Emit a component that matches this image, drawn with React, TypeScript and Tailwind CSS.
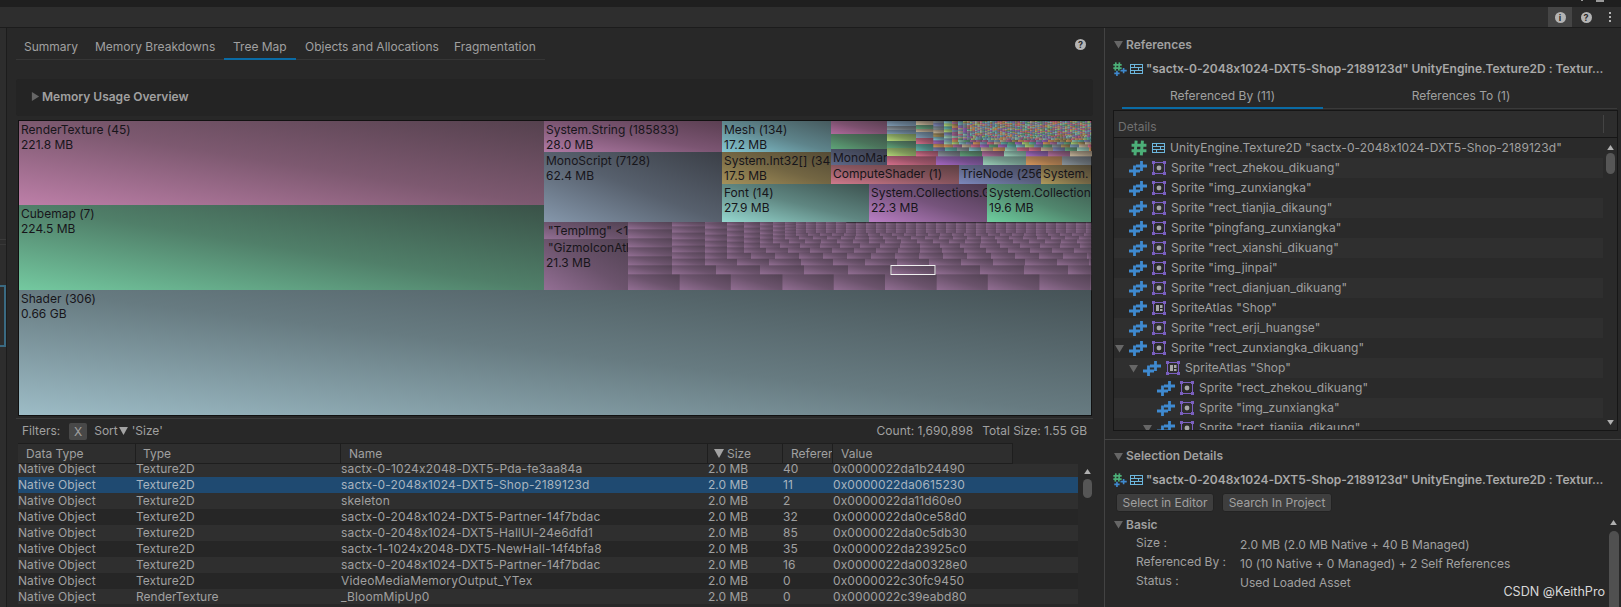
import React from "react";

type Box = { x: number; y: number; w: number; h: number; g: string; a?: string; b?: string; ax?: number };

const GRADS: Record<string, [string, string]> = {
  render: ["#bd7fa8", "#55414e"],
  cube: ["#74c9a0", "#3a5248"],
  shader: ["#9dbcc6", "#465357"],
  str: ["#b07aa5", "#5b3f52"],
  mono: ["#8597ab", "#3b3f47"],
  mesh: ["#85c8d4", "#465a5e"],
  int: ["#a5915a", "#544b35"],
  font: ["#96d8d0", "#3d5350"],
  coll1: ["#ba7fc5", "#4c3a50"],
  coll2: ["#6fd0a0", "#3f5a50"],
  comp: ["#d07a8c", "#5c3f42"],
  trie: ["#7c88bc", "#45485c"],
  sys: ["#b09a5c", "#4d4535"],
  mam: ["#5f6a8c", "#3a3d4a"],
  pink: ["#b06a9c", "#5a4052"],
  green: ["#5ea578", "#3f5549"],
  brick: ["#936f94", "#524253"],
  blue: ["#7f9cb4", "#4c5a68"],
  lime: ["#b4d878", "#5d7048"],
  tan: ["#c4b498", "#6a6055"],
  teal: ["#62b4ac", "#3a5f5c"],
  rose: ["#d8708c", "#70404f"],
  purple: ["#a868c4", "#54406a"],
  orange: ["#d8985c", "#7a5a3f"],
  grey: ["#8a949c", "#4a4e54"],
  mint: ["#9cd0b8", "#56706a"],
};

const NOISE = ["pink", "green", "blue", "lime", "tan", "teal", "rose", "purple", "orange", "grey", "mint", "mesh", "sys", "trie"];

// gradient reads darker through the middle, like the unity shader
function mix(from: string, to: string, t: number) {
  const ch = (s: string, i: number) => parseInt(s.slice(i, i + 2), 16);
  const part = (i: number) => Math.round(ch(from, i) + (ch(to, i) - ch(from, i)) * t);
  return `rgb(${part(1)},${part(3)},${part(5)})`;
}

const LABELLED: Box[] = [
  { x: 19, y: 121, w: 525, h: 84, g: "render", a: "RenderTexture (45)", b: "221.8 MB" },
  { x: 19, y: 205, w: 525, h: 85, g: "cube", a: "Cubemap (7)", b: "224.5 MB" },
  { x: 19, y: 290, w: 1072, h: 125, g: "shader", a: "Shader (306)", b: "0.66 GB" },
  { x: 544, y: 121, w: 178, h: 31, g: "str", a: "System.String (185833)", b: "28.0 MB" },
  { x: 544, y: 152, w: 178, h: 70, g: "mono", a: "MonoScript (7128)", b: "62.4 MB" },
  { x: 722, y: 121, w: 109, h: 31, g: "mesh", a: "Mesh (134)", b: "17.2 MB" },
  { x: 722, y: 152, w: 109, h: 32, g: "int", a: "System.Int32[] (34", b: "17.5 MB" },
  { x: 722, y: 184, w: 147, h: 38, g: "font", a: "Font (14)", b: "27.9 MB" },
  { x: 869, y: 184, w: 118, h: 38, g: "coll1", a: "System.Collections.Ge", b: "22.3 MB" },
  { x: 987, y: 184, w: 104, h: 38, g: "coll2", a: "System.Collections", b: "19.6 MB" },
  { x: 831, y: 121, w: 56, h: 13, g: "pink" },
  { x: 831, y: 134, w: 56, h: 15, g: "green" },
  { x: 831, y: 149, w: 56, h: 16, g: "mam", a: "MonoManager" },
  { x: 831, y: 165, w: 128, h: 19, g: "comp", a: "ComputeShader (1)" },
  { x: 959, y: 165, w: 82, h: 19, g: "trie", a: "TrieNode (2560" },
  { x: 1041, y: 165, w: 50, h: 19, g: "sys", a: "System." },
  { x: 544, y: 222, w: 84, h: 17, g: "brick", a: "\"TempImg\" <1024", ax: 4 },
  { x: 544, y: 239, w: 84, h: 51, g: "brick", a: "\"GizmoIconAtlas", b: "21.3 MB", ax: 4 },
];

const FIXED: Box[] = [
  { x: 887, y: 121, w: 29, h: 5, g: "blue" },
  { x: 887, y: 126, w: 29, h: 4, g: "grey" },
  { x: 887, y: 130, w: 29, h: 4, g: "blue" },
  { x: 887, y: 134, w: 29, h: 7, g: "lime" },
  { x: 887, y: 141, w: 29, h: 7, g: "green" },
  { x: 887, y: 148, w: 29, h: 8, g: "lime" },
  { x: 887, y: 156, w: 49, h: 9, g: "rose" },
  { x: 936, y: 156, w: 47, h: 9, g: "purple" },
  { x: 983, y: 156, w: 43, h: 9, g: "mint" },
  { x: 1026, y: 156, w: 36, h: 9, g: "orange" },
  { x: 1062, y: 156, w: 29, h: 9, g: "grey" },
  { x: 916, y: 121, w: 17, h: 4, g: "tan" },
  { x: 916, y: 125, w: 17, h: 4, g: "green" },
  { x: 916, y: 129, w: 17, h: 3, g: "tan" },
  { x: 916, y: 132, w: 17, h: 6, g: "blue" },
  { x: 916, y: 138, w: 17, h: 6, g: "rose" },
  { x: 916, y: 144, w: 17, h: 7, g: "teal" },
];
["rose", "grey", "green", "pink", "mint", "purple", "pink", "tan"].forEach((g, i) => {
  FIXED.push({ x: 916 + i * 22, y: 151, w: 22, h: 5, g });
});

// carve a region with a bottom row, then a left column, each a bit finer than the last
function carve(x0: number, y0: number, x1: number, y1: number, ws: number[], hs: number[], pick: (n: number) => string) {
  const out: Box[] = [];
  let n = 0;
  let i = 0;
  while (x1 - x0 > 0.5 && y1 - y0 > 0.5) {
    const w = ws[Math.min(i, ws.length - 1)];
    const h = hs[Math.min(i, hs.length - 1)];
    const rowH = Math.min(h, y1 - y0);
    for (let x = x0; x < x1; x += w) {
      out.push({ x, y: y1 - rowH, w: Math.min(w, x1 - x), h: rowH, g: pick(n++) });
    }
    y1 -= rowH;
    const cw = ws[Math.min(i + 1, ws.length - 1)];
    const ch = hs[Math.min(i + 1, hs.length - 1)];
    const colW = Math.min(cw, x1 - x0);
    for (let y = y1; y > y0; y -= ch) {
      out.push({ x: x0, y: Math.max(y - ch, y0), w: colW, h: Math.min(ch, y - y0), g: pick(n++) });
    }
    x0 += colW;
    i += 2;
  }
  return out;
}

const BRICKS = carve(
  628, 222, 1091, 290,
  [51.4, 44, 44, 33, 32, 22, 24, 17, 22, 16, 20, 13, 16, 12, 14, 11, 12, 10],
  [16, 9, 9, 6.5, 6.5, 6, 6, 5.5, 5, 5, 4.5, 4.5, 4, 4, 3.5, 3, 3, 2.5],
  () => "brick",
);

let seed = 17;
const noise = () => {
  seed = (seed * 1103515245 + 12345) & 0x7fffffff;
  return NOISE[(seed >> 8) % NOISE.length];
};
const MOSAIC = carve(
  933, 121, 1091, 151,
  [12, 11, 9, 8, 7, 6, 6, 5, 4, 4, 3, 3, 3, 2.5],
  [4, 3.5, 3, 3, 2.5, 2, 2, 1.5, 1.5, 1.5, 1.2, 1.2, 1, 1],
  noise,
);

function TreeMap() {
  return (
    <svg viewBox="18 120 1074 296" className="w-[1074px] h-[296px] block shrink-0 ml-[11px]">
      <defs>
        {Object.entries(GRADS).map(([k, [from, to]]) => (
          <linearGradient key={k} id={k} x1="0" y1="1" x2="1" y2="0">
            <stop offset="0" stopColor={from} />
            <stop offset="0.5" stopColor={mix(from, to, 0.62)} />
            <stop offset="1" stopColor={to} />
          </linearGradient>
        ))}
      </defs>
      <rect x="18" y="120" width="1074" height="296" fill="#111111" />
      {[...BRICKS, ...MOSAIC, ...FIXED].map((b, i) => (
        <rect key={i} x={b.x} y={b.y} width={b.w + 0.3} height={b.h + 0.3} fill={`url(#${b.g})`} />
      ))}
      {LABELLED.map((b) => (
        <svg key={`${b.x}-${b.y}`} x={b.x} y={b.y} width={b.w} height={b.h}>
          <rect width={b.w} height={b.h} fill={`url(#${b.g})`} />
          {b.a && (
            <text x={b.ax ?? 2} y="13" fontSize="12" fill="#17151a">
              {b.a}
            </text>
          )}
          {b.b && (
            <text x="2" y="28" fontSize="12" fill="#17151a">
              {b.b}
            </text>
          )}
        </svg>
      ))}
      <rect x="891" y="265.5" width="44" height="9" fill="none" stroke="#f0f0f0" strokeWidth="1" />
    </svg>
  );
}

function Tri({ open }: { open?: boolean }) {
  return (
    <svg viewBox="0 0 10 10" className="w-[9px] h-[9px] shrink-0">
      {open ? <polygon points="0,1 10,1 5,9.5" fill="#666666" /> : <polygon points="1,0 9,5 1,10" fill="#666666" />}
    </svg>
  );
}

function HashIcon({ big }: { big?: boolean }) {
  return (
    <svg viewBox="0 0 14 14" className={big ? "w-[16px] h-[16px] shrink-0" : "w-[9px] h-[9px] shrink-0"}>
      <path d="M4.5 0.5 L3.5 13.5 M10 0.5 L9 13.5 M0.5 4.5 H13.5 M0.5 9.5 H13.5" stroke="#4caf78" strokeWidth="2.6" fill="none" />
    </svg>
  );
}

function PlusPair() {
  return (
    <svg viewBox="0 0 18 15" className="w-[18px] h-[15px] shrink-0">
      <path d="M0 10 H11 M5.5 4.5 V15" stroke="#3f8ad0" strokeWidth="2.8" fill="none" />
      <path d="M7 5 H18 M12.5 0 V10" stroke="#3f8ad0" strokeWidth="2.8" fill="none" />
    </svg>
  );
}

function MiniRefIcon() {
  return (
    <span className="w-[14px] h-[14px] shrink-0 relative block">
      <span className="absolute left-0 top-0 block leading-none">
        <HashIcon />
      </span>
      <svg viewBox="0 0 14 9" className="absolute left-[1px] top-[6px] w-[13px] h-[8px]">
        <path d="M0 6 H6 M3 3 V9" stroke="#3f8ad0" strokeWidth="1.8" fill="none" />
        <path d="M7 3 H14 M10.5 0 V6" stroke="#3f8ad0" strokeWidth="1.8" fill="none" />
      </svg>
    </span>
  );
}

function BrickIcon() {
  return (
    <svg viewBox="0 0 13 10" className="w-[13px] h-[10px] shrink-0">
      <rect x="0.5" y="0.5" width="12" height="9" fill="none" stroke="#6cb6dc" />
      <path d="M0 3.5 H13 M0 6.5 H13 M4.5 0 V3.5 M8.5 3.5 V6.5 M4.5 6.5 V10" stroke="#6cb6dc" fill="none" />
    </svg>
  );
}

function SpriteIcon({ atlas }: { atlas?: boolean }) {
  return (
    <svg viewBox="0 0 14 14" className="w-[14px] h-[14px] shrink-0">
      <rect x="1.5" y="1.5" width="11" height="11" fill="none" stroke="#7a5fc0" />
      <path d="M0 0 h3 v3 h-3 z M11 0 h3 v3 h-3 z M0 11 h3 v3 h-3 z M11 11 h3 v3 h-3 z" fill="#7a5fc0" />
      {atlas ? (
        <path d="M4 4 h3 v6 h-3 z M8 4 h2.5 v3 h-2.5 z M8 8 h2.5 v2 h-2.5 z" fill="#a8a8a8" />
      ) : (
        <circle cx="7" cy="7" r="2.4" fill="#a8a8a8" />
      )}
    </svg>
  );
}

function RoundIcon({ glyph }: { glyph: string }) {
  return (
    <span className="w-[11px] h-[11px] rounded-full bg-[#b4b4b4] text-[#2b2b2b] text-[9px] font-bold leading-[11px] text-center block">
      {glyph}
    </span>
  );
}

const TABS = [
  { label: "Summary", cls: "w-[71px] pl-2 border-b border-[#363636]" },
  { label: "Memory Breakdowns", cls: "w-[137px] pl-2 border-b border-[#363636]" },
  { label: "Tree Map", cls: "w-[72px] pl-[9px] border-b-2 border-[#0a6ba5]" },
  { label: "Objects and Allocations", cls: "w-[150px] pl-[9px] border-b border-[#363636]" },
  { label: "Fragmentation", cls: "w-[99px] pl-2 border-b border-[#363636]" },
];

const OBJECTS = [
  ["Texture2D", "sactx-0-1024x2048-DXT5-Pda-fe3aa84a", "40", "0x0000022da1b24490"],
  ["Texture2D", "sactx-0-2048x1024-DXT5-Shop-2189123d", "11", "0x0000022da0615230"],
  ["Texture2D", "skeleton", "2", "0x0000022da11d60e0"],
  ["Texture2D", "sactx-0-2048x1024-DXT5-Partner-14f7bdac", "32", "0x0000022da0ce58d0"],
  ["Texture2D", "sactx-0-2048x1024-DXT5-HallUI-24e6dfd1", "85", "0x0000022da0c5db30"],
  ["Texture2D", "sactx-1-1024x2048-DXT5-NewHall-14f4bfa8", "35", "0x0000022da23925c0"],
  ["Texture2D", "sactx-0-2048x1024-DXT5-Partner-14f7bdac", "16", "0x0000022da00328e0"],
  ["Texture2D", "VideoMediaMemoryOutput_YTex", "0", "0x0000022c30fc9450"],
  ["RenderTexture", "_BloomMipUp0", "0", "0x0000022c39eabd80"],
];

const REFS = [
  { name: "Sprite \"rect_zhekou_dikuang\"", depth: 0 },
  { name: "Sprite \"img_zunxiangka\"", depth: 0 },
  { name: "Sprite \"rect_tianjia_dikaung\"", depth: 0 },
  { name: "Sprite \"pingfang_zunxiangka\"", depth: 0 },
  { name: "Sprite \"rect_xianshi_dikuang\"", depth: 0 },
  { name: "Sprite \"img_jinpai\"", depth: 0 },
  { name: "Sprite \"rect_dianjuan_dikuang\"", depth: 0 },
  { name: "SpriteAtlas \"Shop\"", depth: 0, atlas: true },
  { name: "Sprite \"rect_erji_huangse\"", depth: 0 },
  { name: "Sprite \"rect_zunxiangka_dikuang\"", depth: 0, open: true },
  { name: "SpriteAtlas \"Shop\"", depth: 1, atlas: true, open: true },
  { name: "Sprite \"rect_zhekou_dikuang\"", depth: 2 },
  { name: "Sprite \"img_zunxiangka\"", depth: 2 },
  { name: "Sprite \"rect_tianjia_dikaung\"", depth: 2, open: true },
];

const DEPTH_PAD = ["pl-[15px]", "pl-[29px]", "pl-[43px]"];

const TITLE = "\"sactx-0-2048x1024-DXT5-Shop-2189123d\" UnityEngine.Texture2D : Textur...";

function TitleLine() {
  return (
    <div className="flex items-center h-[16px] pl-[8px]">
      <MiniRefIcon />
      <span className="ml-[3px]">
        <BrickIcon />
      </span>
      <span className="ml-[3px] font-semibold text-[#a9a9a9] whitespace-nowrap">{TITLE}</span>
    </div>
  );
}

export default function App() {
  return (
    <div className="w-[1621px] h-[607px] overflow-hidden bg-[#282828] text-[#a0a0a0] text-[12px] leading-4 flex flex-col font-['Inter',sans-serif] [font-feature-settings:'calt'_0]">
      <div className="h-[7px] bg-[#1f1f1f] shrink-0 flex justify-end">
        <span className="w-[2px] h-px bg-[#9a9a9a] mr-[13px]" />
        <span className="w-[8px] h-[2px] bg-[#9a9a9a] mr-[17px]" />
      </div>
      <div className="h-[21px] shrink-0 bg-[#2e2e2e] border-b border-[#1c1c1c] flex justify-end">
        <div className="w-[24px] h-[20px] bg-[#454545] flex items-center justify-center mr-px">
          <RoundIcon glyph="i" />
        </div>
        <div className="w-[26px] h-[20px] flex items-center justify-center">
          <RoundIcon glyph="?" />
        </div>
        <div className="w-[22px] h-[20px] flex flex-col items-center justify-center gap-[2px]">
          <span className="w-[2px] h-[2px] bg-[#b4b4b4]" />
          <span className="w-[2px] h-[2px] bg-[#b4b4b4]" />
          <span className="w-[2px] h-[2px] bg-[#b4b4b4]" />
        </div>
      </div>

      <div className="flex flex-1 min-h-0">
        {/* clipped neighbour panel */}
        <div className="w-[7px] shrink-0 bg-[#2d2d2d] border-r border-[#1c1c1c] flex flex-col">
          <div className="h-[212px] border-b border-[#3a3a3a]" />
          <div className="h-[5px] border-b border-[#383838]" />
          <div className="h-[40px]" />
          <div className="h-[62px] border-y-2 border-r-2 border-[#3a6a82]" />
        </div>

        <div className="w-[1097px] shrink-0 flex flex-col">
          <div className="flex h-[32px] ml-[9px] mr-[10px] pt-[8px] items-stretch relative">
            {TABS.map((t) => (
              <div key={t.label} className={`${t.cls} h-[24px] leading-[21px] whitespace-nowrap shrink-0`}>
                {t.label}
              </div>
            ))}
            <span className="ml-auto mr-[8px] mt-[3px]">
              <RoundIcon glyph="?" />
            </span>
          </div>

          <div className="h-[37px] mt-[19px] ml-[9px] w-[1077px] bg-[#242424] rounded-[3px] flex items-center pl-[15px] pb-[2px] gap-[2px] shrink-0">
            <Tri />
            <span className="font-semibold text-[#a0a0a0]">Memory Usage Overview</span>
          </div>

          <div className="mt-[4px]">
            <TreeMap />
          </div>

          <div className="h-px mt-[2px] ml-[9px] w-[1077px] bg-[#3a3a3a] shrink-0" />

          <div className="h-[24px] flex items-center ml-[15px] w-[1065px] shrink-0">
            <span>Filters:</span>
            <span className="ml-[9px] w-[18px] h-[17px] bg-[#484848] rounded-[2px] text-center leading-[17px]">X</span>
            <span className="ml-[7px] flex items-center">
              Sort
              <svg viewBox="0 0 10 9" className="w-[9px] h-[8px] mx-[1px]">
                <polygon points="0,0 10,0 5,9" fill="#a3a3a3" />
              </svg>
              <span className="ml-[3px]">'Size'</span>
            </span>
            <span className="ml-auto">Count: 1,690,898</span>
            <span className="ml-[9px]">Total Size: 1.55 GB</span>
          </div>

          <div className="flex ml-[11px] w-[995px] h-[21px] bg-[#2e2e2e] border-y border-[#1e1e1e] shrink-0">
            <div className="w-[118px] pl-2 border-r border-[#1e1e1e] leading-[19px]">Data Type</div>
            <div className="w-[205px] pl-[7px] border-r border-[#1e1e1e] leading-[19px]">Type</div>
            <div className="w-[367px] pl-2 border-r border-[#1e1e1e] leading-[19px]">Name</div>
            <div className="w-[75px] pl-[6px] border-r border-[#1e1e1e] flex items-center gap-[3px]">
              <svg viewBox="0 0 10 9" className="w-[10px] h-[9px]">
                <polygon points="0,0 10,0 5,9" fill="#a3a3a3" />
              </svg>
              Size
            </div>
            <div className="w-[50px] pl-2 pr-[2px] border-r border-[#1e1e1e] leading-[19px] overflow-hidden whitespace-nowrap">References</div>
            <div className="w-[180px] pl-2 border-r border-[#1e1e1e] leading-[19px]">Value</div>
          </div>

          <div className="flex ml-[11px] h-[140px] shrink-0">
            <div className="w-[1060px] overflow-hidden">
              <div className="-mt-[3px]">
                {OBJECTS.map((o, i) => (
                  <div
                    key={i}
                    className={`flex h-[16px] leading-[16px] ${i === 1 ? "bg-[#1f4a71] text-[#a8b4bf]" : i % 2 === 0 ? "bg-[#2f2f2f]" : "bg-[#262626]"}`}
                  >
                    <span className="w-[118px] shrink-0 tracking-[0.08px]">Native Object</span>
                    <span className="w-[205px] shrink-0">{o[0]}</span>
                    <span className="w-[367px] shrink-0 tracking-[0.16px]">{o[1]}</span>
                    <span className="w-[75px] shrink-0">2.0 MB</span>
                    <span className="w-[50px] shrink-0">{o[2]}</span>
                    <span className="tracking-[0.1px]">{o[3]}</span>
                  </div>
                ))}
              </div>
            </div>
            <div className="w-[14px] flex flex-col items-center pt-[5px] pl-[4px]">
              <svg viewBox="0 0 8 6" className="w-[7px] h-[5px]">
                <polygon points="4,0 8,6 0,6" fill="#b0b0b0" />
              </svg>
              <div className="w-[9px] h-[19px] mt-[5px] bg-[#565656] rounded-[5px]" />
            </div>
          </div>
        </div>

        <div className="flex-1 min-w-0 border-l border-[#434343] flex flex-col">
          <div className="h-[33px] pl-[9px] flex items-center gap-[3px]">
            <Tri open />
            <span className="font-semibold text-[#a0a0a0]">References</span>
          </div>
          <TitleLine />
          <div className="flex h-[23px] ml-[17px] mr-[4px] mt-[9px] border-b border-[#3a3a3a] shrink-0">
            <div className="w-[201px] h-[23px] border-b-2 border-[#0a6ba5] text-center leading-[20px]">Referenced By (11)</div>
            <div className="flex-1 text-center leading-[20px] pr-[18px]">References To (1)</div>
          </div>

          <div className="h-[321px] ml-[8px] mr-[3px] mt-[1px] border border-[#161616] bg-[#2a2a2a] flex flex-col shrink-0">
            <div className="h-[27px] border-b border-[#161616] flex items-end shrink-0 pl-[4px] relative bg-[#2d2d2d]">
              <span className="text-[#707070] leading-[20px]">Details</span>
              <span className="ml-auto mr-[13px] mb-[4px] w-px h-[18px] bg-[#444444]" />
            </div>
            <div className="flex flex-1 min-h-0">
              <div className="flex-1 overflow-hidden tracking-[0.07px]">
                <div className="flex items-center h-[20px] pl-[16px] bg-[#2a2a2a]">
                  <span className="w-[18px] flex justify-center">
                    <HashIcon big />
                  </span>
                  <span className="ml-[4px]">
                    <BrickIcon />
                  </span>
                  <span className="ml-[5px] whitespace-nowrap">UnityEngine.Texture2D "sactx-0-2048x1024-DXT5-Shop-2189123d"</span>
                </div>
                {REFS.map((r, i) => (
                  <div
                    key={i}
                    className={`flex items-center h-[20px] relative ${DEPTH_PAD[r.depth]} ${i % 2 === 0 ? "bg-[#2f2f2f]" : "bg-[#2a2a2a]"}`}
                  >
                    {r.open && (
                      <span className="w-[9px] -ml-[14px] mr-[5px] block">
                        <Tri open />
                      </span>
                    )}
                    <PlusPair />
                    <span className="ml-[5px]">
                      <SpriteIcon atlas={r.atlas} />
                    </span>
                    <span className="ml-[5px] whitespace-nowrap">{r.name}</span>
                  </div>
                ))}
              </div>
              <div className="w-[14px] shrink-0 flex flex-col items-center pt-[7px] pb-[5px]">
                <svg viewBox="0 0 8 6" className="w-[7px] h-[5px]">
                  <polygon points="4,0 8,6 0,6" fill="#b0b0b0" />
                </svg>
                <div className="w-[9px] h-[21px] mt-[3px] bg-[#565656] rounded-[5px]" />
                <svg viewBox="0 0 8 6" className="w-[7px] h-[5px] mt-auto">
                  <polygon points="0,0 8,0 4,6" fill="#b0b0b0" />
                </svg>
              </div>
            </div>
          </div>

          <div className="h-px mt-[8px] bg-[#434343] shrink-0" />

          <div className="h-[32px] pl-[9px] flex items-center gap-[3px] shrink-0">
            <Tri open />
            <span className="font-semibold text-[#a0a0a0]">Selection Details</span>
          </div>
          <TitleLine />
          <div className="flex gap-[8px] ml-[11px] mt-[5px]">
            <div className="w-[98px] h-[19px] bg-[#3e3e3e] border border-[#232323] rounded-[3px] text-center leading-[17px]">Select in Editor</div>
            <div className="w-[110px] h-[19px] bg-[#3e3e3e] border border-[#232323] rounded-[3px] text-center leading-[17px]">Search In Project</div>
          </div>

          <div className="flex flex-1 min-h-0 mt-[3px]">
            <div className="flex-1 min-w-0">
              <div className="pl-[9px] h-[19px] flex items-center gap-[3px]">
                <Tri open />
                <span className="font-semibold text-[#a0a0a0]">Basic</span>
              </div>
              <div className="grid grid-cols-[104px_1fr] gap-y-[1px] ml-[31px] mt-[1px]">
                <span>Size :</span>
                <span className="mt-[2px]">2.0 MB (2.0 MB Native + 40 B Managed)</span>
                <span>Referenced By :</span>
                <span className="mt-[2px]">10 (10 Native + 0 Managed) + 2 Self References</span>
                <span>Status :</span>
                <span className="mt-[2px]">Used Loaded Asset</span>
              </div>
            </div>
            <div className="w-[15px] shrink-0 flex flex-col items-center pt-[5px]">
              <svg viewBox="0 0 8 6" className="w-[7px] h-[5px]">
                <polygon points="4,0 8,6 0,6" fill="#b0b0b0" />
              </svg>
              <div className="w-[10px] flex-1 mt-[6px] bg-[#505050] rounded-t-[5px]" />
            </div>
          </div>

          <div className="relative h-0">
            <span className="absolute right-[16px] bottom-[7px] text-[12.6px] text-[#d8d8d8] leading-4">CSDN @KeithPro</span>
          </div>
        </div>
      </div>
    </div>
  );
}
